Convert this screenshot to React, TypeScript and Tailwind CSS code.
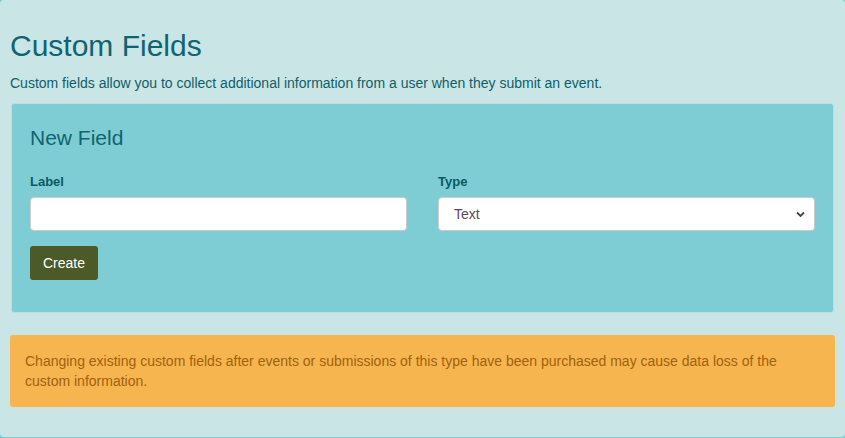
import { useState } from "react";

export default function App() {
  const [label, setLabel] = useState("");
  const [type, setType] = useState("text");

  return (
    <div className="h-[438px] w-[845px] bg-[#7ecdd4] font-['Liberation_Sans',Arial,sans-serif]">
      <div className="h-[437px] rounded-[4px] bg-[#cae5e6] px-[10px] pt-[26px]">
        <h1 className="text-[30px] leading-[40px] text-[#0f6470]">Custom Fields</h1>
        <p className="mt-[7px] text-[14px] leading-[20px] text-[#0f5f69]">
          Custom fields allow you to collect additional information from a user when they submit an event.
        </p>

        {/* New field panel */}
        <div className="mx-px mt-[10px] h-[210px] rounded-[3px] border border-[#b9e0e3] bg-[#7ecdd4] px-[18px] pt-[19px]">
          <h3 className="text-[21px] leading-[30px] text-[#0f6470]">New Field</h3>
          <div className="mt-[19px] grid grid-cols-2 gap-[31px]">
            <div>
              <label className="block text-[13px] font-bold leading-[20px] text-[#0b5a63]">Label</label>
              <input
                type="text"
                value={label}
                onChange={(e) => setLabel(e.target.value)}
                className="mt-[5px] block h-[34px] w-full rounded-[4px] border border-[#cccccc] bg-white px-3 text-[14px] text-[#555] outline-none"
              />
            </div>
            <div>
              <label className="block text-[13px] font-bold leading-[20px] text-[#0b5a63]">Type</label>
              <div className="relative mt-[5px]">
                <select
                  value={type}
                  onChange={(e) => setType(e.target.value)}
                  className="block h-[34px] w-full appearance-none rounded-[4px] border border-[#cccccc] bg-white pl-[15px] text-[14px] text-[#5a4a5e] outline-none"
                >
                  <option value="text">Text</option>
                  <option value="number">Number</option>
                  <option value="date">Date</option>
                </select>
                <svg
                  className="pointer-events-none absolute right-[10px] top-[14px]"
                  width="9"
                  height="7"
                  viewBox="0 0 9 7"
                  fill="none"
                >
                  <path d="M1 1.5 4.5 5 8 1.5" stroke="#444" strokeWidth="1.8" />
                </svg>
              </div>
            </div>
          </div>
          <button className="mt-[15px] h-[34px] w-[68px] rounded-[3px] bg-[#4b5a27] text-[14px] text-white">
            Create
          </button>
        </div>

        {/* Warning */}
        <div className="mt-[22px] rounded-[3px] bg-[#f7b54f] px-[15px] pb-[16px] pt-[16px] text-[14px] leading-[20px] text-[#a0620e]">
          Changing existing custom fields after events or submissions of this type have been purchased may cause data loss of the custom information.
        </div>
      </div>
    </div>
  );
}
